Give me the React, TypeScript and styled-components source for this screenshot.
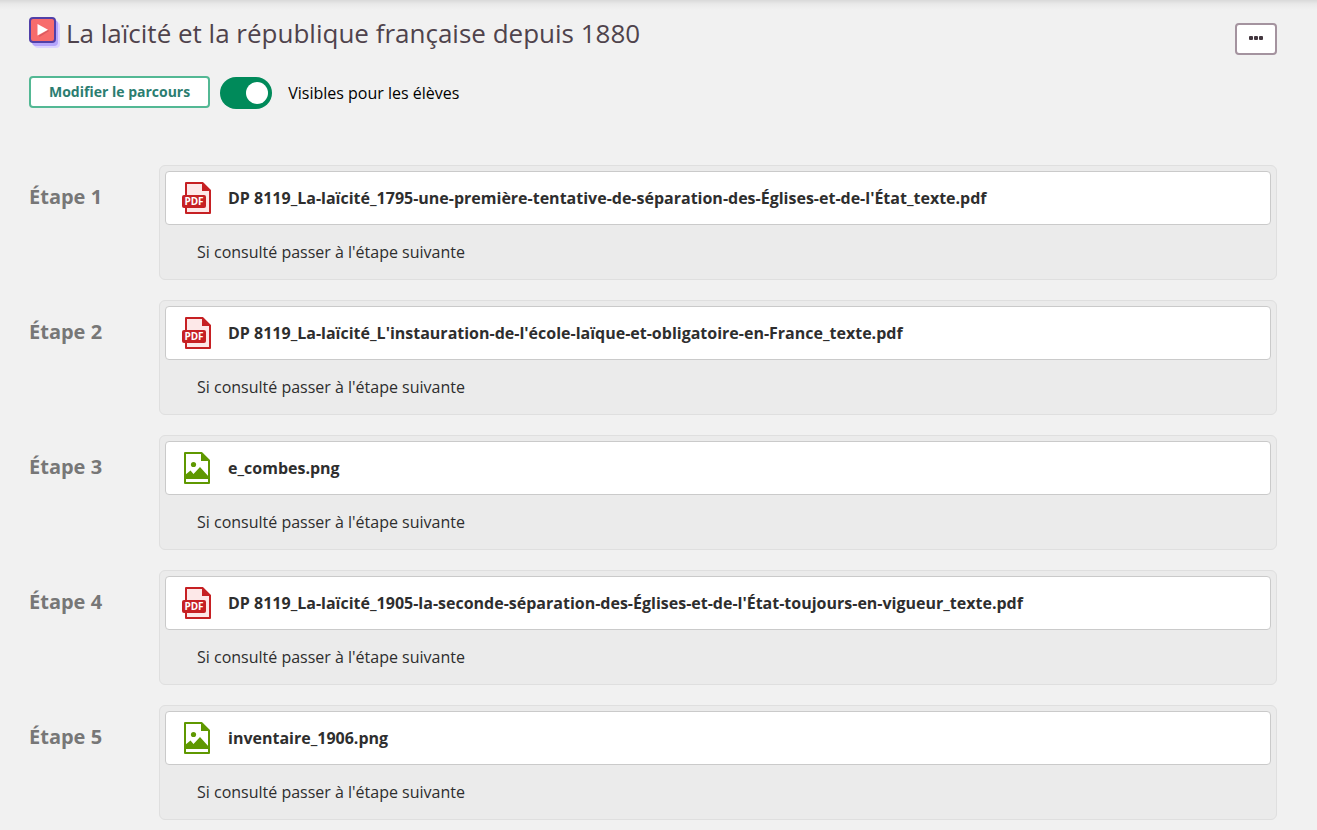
import React, { useState } from "react";
import styled, { createGlobalStyle } from "styled-components";

const GlobalStyle = createGlobalStyle`
  *, *::before, *::after { box-sizing: border-box; }
  body {
    margin: 0;
    background: #f1f1f1;
    color: #2e2e2e;
    font-family: "Open Sans", "Noto Sans", sans-serif;
    font-size: 16px;
  }
`;

const Page = styled.main`
  min-height: 100vh;
  padding: 16px 40px 10px 29px;
  background: linear-gradient(#d9d9d9, #e9e9e9 4px, #f1f1f1 10px);
`;

const Header = styled.header`
  display: flex;
  align-items: flex-start;
  justify-content: space-between;
  height: 60px;
`;

const TitleGroup = styled.div`
  display: flex;
  align-items: flex-start;
  gap: 4px;
`;

const Title = styled.h1`
  margin: 0;
  color: #4f434c;
  font-size: 26px;
  font-weight: 400;
  line-height: 34px;
`;

const MoreButton = styled.button`
  display: flex;
  align-items: center;
  justify-content: center;
  width: 42px;
  height: 32px;
  margin-top: 7px;
  padding: 0 0 2px;
  border: 2px solid #a4939f;
  border-radius: 4px;
  background: #fff;
  cursor: pointer;
`;

const Toolbar = styled.div`
  display: flex;
  align-items: flex-start;
  gap: 10px;
  height: 33px;
`;

const EditButton = styled.button`
  height: 32px;
  padding: 0 18px;
  border: 2px solid #53b894;
  border-radius: 4px;
  background: #fff;
  color: #2b7d70;
  font-family: inherit;
  font-size: 14px;
  font-weight: 700;
  line-height: 20px;
  cursor: pointer;
`;

const SwitchLabel = styled.label`
  display: flex;
  align-items: center;
  gap: 16px;
  color: #000;
  line-height: 24px;
  cursor: pointer;
`;

const Switch = styled.input`
  appearance: none;
  display: flex;
  align-items: center;
  justify-content: flex-start;
  width: 52px;
  height: 32px;
  margin: 1px 0 0;
  padding: 0 4px;
  border-radius: 16px;
  background: #8c8c8c;
  cursor: pointer;

  &::before {
    content: "";
    width: 22px;
    height: 22px;
    border-radius: 50%;
    background: #fff;
  }

  &:checked {
    justify-content: flex-end;
    background: #008a5a;
  }
`;

const StepList = styled.ol`
  display: flex;
  flex-direction: column;
  gap: 20px;
  margin: 56px 0 0;
  padding: 0;
  list-style: none;
`;

const Step = styled.li`
  display: grid;
  grid-template-columns: 130px 1fr;
`;

const StepName = styled.h2`
  margin: 0;
  padding-top: 18px;
  color: #777;
  font-size: 20px;
  font-weight: 700;
  line-height: 28px;
`;

const Card = styled.section`
  padding: 5px;
  border: 1px solid #dfdfdf;
  border-radius: 6px;
  background: #ebebeb;
`;

const Resource = styled.a`
  display: flex;
  align-items: center;
  gap: 16px;
  height: 54px;
  padding: 0 16px;
  border: 1px solid #cacaca;
  border-radius: 4px;
  background: #fff;
  color: #2e2e2e;
  font-weight: 700;
  line-height: 24px;
  text-decoration: none;
`;

const Condition = styled.p`
  margin: 0;
  padding: 15px 32px 10px;
  font-weight: 400;
  line-height: 24px;
`;

const PathIcon = () => (
  <svg width="33" height="34" viewBox="0 0 33 34" aria-hidden="true">
    <rect x="5" y="6" width="26" height="26" rx="4" fill="#dcd4ff" />
    <rect x="3" y="4" width="26" height="26" rx="4" fill="#b4a5fb" />
    <rect x="1" y="2" width="25" height="24" rx="3" fill="#f76c6c" stroke="#5140a8" strokeWidth="2" />
    <path d="M10 19.5 19 14l1 1-9.500 6Z" fill="#d95a60" />
    <path d="M8.500 8v11.500L19 13.700Z" fill="#fff" />
  </svg>
);

const DotsIcon = () => (
  <svg width="16" height="4" viewBox="0 0 16 4" aria-hidden="true">
    <g fill="#43373f">
      <rect x="1" width="4" height="4" rx="1" />
      <rect x="6" width="4" height="4" rx="1" />
      <rect x="11" width="4" height="4" rx="1" />
    </g>
  </svg>
);

const PdfIcon = () => (
  <svg width="30" height="32" viewBox="0 0 30 32" role="img" aria-label="Document PDF">
    <path d="M4 1h16.500L28 8.500V31H4Z" fill="#fde8e8" stroke="#c62023" strokeWidth="2" strokeLinejoin="round" />
    <path d="M20 0v9h9Z" fill="#c62023" />
    <rect y="13" width="24" height="13" rx="2" fill="#c62023" />
    <text x="12" y="23" textAnchor="middle" fill="#fff" fontFamily="Open Sans" fontSize="10" fontWeight="700">
      PDF
    </text>
  </svg>
);

const ImageIcon = () => (
  <svg width="30" height="32" viewBox="0 0 30 32" role="img" aria-label="Image">
    <path d="M3 1h16.500L27 8.500V31H3Z" fill="#fff" stroke="#5f9800" strokeWidth="2" strokeLinejoin="round" />
    <path d="M19 0v9h9Z" fill="#5f9800" />
    <circle cx="11.500" cy="12.500" r="2.600" fill="#5f9800" />
    <path d="M3 27v-4l5.500-4.500 3 3.500 6.500-7 9 10v2Z" fill="#5f9800" />
  </svg>
);

type StepData = { kind: "pdf" | "image"; file: string };

const steps: StepData[] = [
  { kind: "pdf", file: "DP 8119_La-laïcité_1795-une-première-tentative-de-séparation-des-Églises-et-de-l'État_texte.pdf" },
  { kind: "pdf", file: "DP 8119_La-laïcité_L'instauration-de-l'école-laïque-et-obligatoire-en-France_texte.pdf" },
  { kind: "image", file: "e_combes.png" },
  { kind: "pdf", file: "DP 8119_La-laïcité_1905-la-seconde-séparation-des-Églises-et-de-l'État-toujours-en-vigueur_texte.pdf" },
  { kind: "image", file: "inventaire_1906.png" },
];

export default function App() {
  const [visible, setVisible] = useState(true);

  return (
    <>
      <GlobalStyle />
      <Page>
        <Header>
          <TitleGroup>
            <PathIcon />
            <Title>La laïcité et la république française depuis 1880</Title>
          </TitleGroup>
          <MoreButton type="button" aria-label="Plus d'options">
            <DotsIcon />
          </MoreButton>
        </Header>
        <Toolbar>
          <EditButton type="button">Modifier le parcours</EditButton>
          <SwitchLabel htmlFor="visibility">
            <Switch
              id="visibility"
              type="checkbox"
              role="switch"
              checked={visible}
              onChange={(event) => setVisible(event.target.checked)}
            />
            Visibles pour les élèves
          </SwitchLabel>
        </Toolbar>
        <StepList>
          {steps.map((step, index) => (
            <Step key={step.file}>
              <StepName>Étape {index + 1}</StepName>
              <Card>
                <Resource href="#">
                  {step.kind === "pdf" ? <PdfIcon /> : <ImageIcon />}
                  {step.file}
                </Resource>
                <Condition>Si consulté passer à l'étape suivante</Condition>
              </Card>
            </Step>
          ))}
        </StepList>
      </Page>
    </>
  );
}
